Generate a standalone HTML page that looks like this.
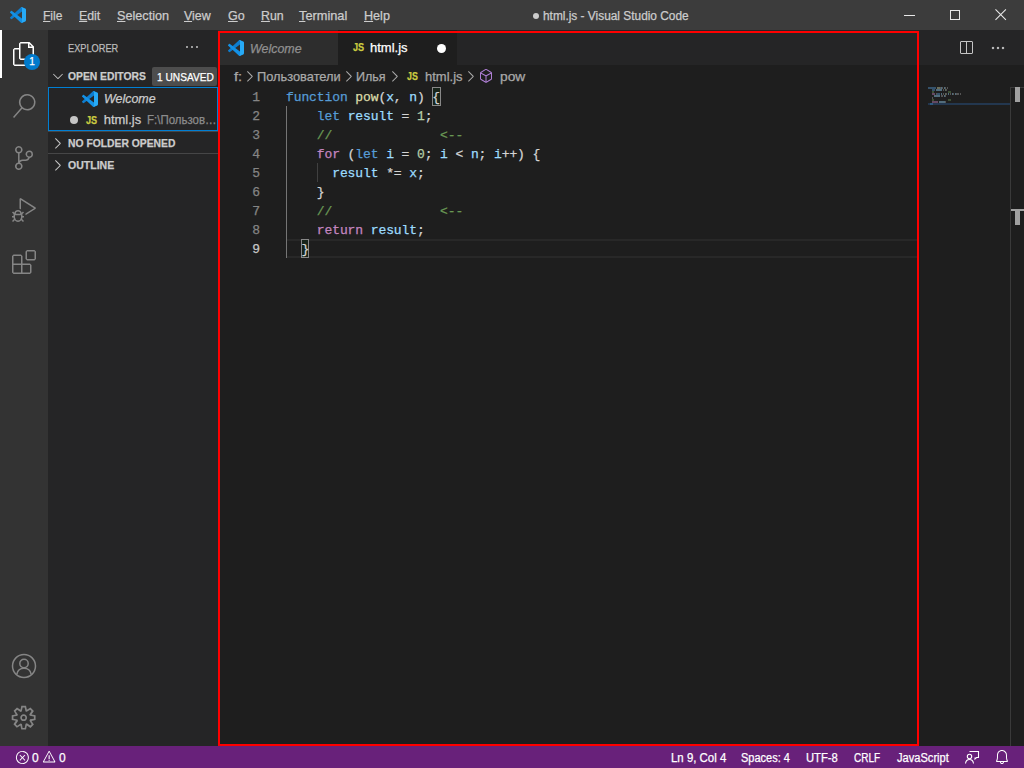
<!DOCTYPE html>
<html lang="en">
<head>
<meta charset="utf-8">
<title>html.js - Visual Studio Code</title>
<style>
*{box-sizing:border-box;margin:0;padding:0}
html,body{width:1024px;height:768px;overflow:hidden;background:#1e1e1e}
body{position:relative;font-family:"Liberation Sans",sans-serif;font-size:13px;color:#ccc}
.abs{position:absolute}
.t{position:absolute;white-space:pre;line-height:16px;height:16px;-webkit-text-stroke:0.25px currentColor}
u{text-decoration:underline;text-underline-offset:1px;text-decoration-thickness:1px}
.m{top:8px;font-size:13px;color:#ccc}
.sb{top:750px;font-size:12px;color:#fff}
.hd{font-size:11px;font-weight:bold;color:#ccc}
.code{font-family:"Liberation Mono",monospace;font-size:13px;margin-top:1px;letter-spacing:-0.1px;color:#d4d4d4;left:286px;line-height:19px;height:19px}
.ln{font-family:"Liberation Mono",monospace;font-size:13px;margin-top:1px;color:#858585;left:236px;width:24px;text-align:right;line-height:19px;height:19px}
.k{color:#569cd6}.f{color:#dcdcaa}.v{color:#9cdcfe}.n{color:#b5cea8}.c{color:#6a9955}.p{color:#c586c0}
.js{font-size:11px;font-weight:bold;color:#cbcb41}
.bc{top:68.5px;font-size:13px;color:#a9a9a9}
#t1{left:43.34px !important;transform:scaleX(0.9253);transform-origin:0 0}
#t2{left:78.63px !important;transform:scaleX(0.9496);transform-origin:0 0}
#t3{left:117.07px !important;transform:scaleX(0.9726);transform-origin:0 0}
#t4{left:184.39px !important;transform:scaleX(0.9540);transform-origin:0 0}
#t5{left:227.91px !important;transform:scaleX(0.9618);transform-origin:0 0}
#t6{left:260.74px !important;transform:scaleX(0.9484);transform-origin:0 0}
#t7{left:298.93px !important;transform:scaleX(0.9835);transform-origin:0 0}
#t8{left:363.67px !important;transform:scaleX(0.9698);transform-origin:0 0}
#t9{left:542.52px !important;transform:scaleX(0.9897);transform-origin:0 0}
#t11{left:68.29px !important;transform:scaleX(0.8390);transform-origin:0 0}
#t12{left:68.28px !important;transform:scaleX(0.9384);transform-origin:0 0}
#t13{left:156.70px !important;transform:scaleX(0.9230);transform-origin:0 0}
#t14{left:103.56px !important;transform:scaleX(0.9575);transform-origin:0 0}
#t15{left:86.32px !important;transform:scaleX(0.8302);transform-origin:0 0}
#t16{left:103.70px !important;transform:scaleX(1.0000);transform-origin:0 0}
#t17{left:146.86px !important;transform:scaleX(0.9562);transform-origin:0 0}
#t18{left:68.04px !important;transform:scaleX(0.9398);transform-origin:0 0}
#t19{left:68.32px !important;transform:scaleX(0.9563);transform-origin:0 0}
#t20{left:250.27px !important;transform:scaleX(0.9558);transform-origin:0 0}
#t21{left:352.88px !important;transform:scaleX(0.8302);transform-origin:0 0}
#t22{left:369.58px !important;transform:scaleX(0.9986);transform-origin:0 0}
#t23{left:234.27px !important;transform:scaleX(1.1361);transform-origin:0 0}
#t24{left:257.38px !important;transform:scaleX(0.9868);transform-origin:0 0}
#t25{left:356.26px !important;transform:scaleX(0.9641);transform-origin:0 0}
#t26{left:407.15px !important;transform:scaleX(0.8038);transform-origin:0 0}
#t27{left:424.84px !important;transform:scaleX(0.9986);transform-origin:0 0}
#t28{left:499.92px !important;transform:scaleX(1.0596);transform-origin:0 0}
#t49{left:670.83px !important;transform:scaleX(0.9520);transform-origin:0 0}
#t50{left:741.43px !important;transform:scaleX(0.9151);transform-origin:0 0}
#t51{left:806.09px !important;transform:scaleX(0.9368);transform-origin:0 0}
#t52{left:854.22px !important;transform:scaleX(0.8341);transform-origin:0 0}
#t53{left:897.49px !important;transform:scaleX(0.9244);transform-origin:0 0}
</style>
</head>
<body>

<!-- ===== backgrounds ===== -->
<div class="abs" style="left:0;top:0;width:1024px;height:30px;background:#3c3c3c"></div>
<div class="abs" style="left:0;top:30px;width:48px;height:716px;background:#333"></div>
<div class="abs" style="left:48px;top:30px;width:170px;height:716px;background:#252526"></div>
<div class="abs" style="left:218px;top:30px;width:806px;height:35px;background:#252526"></div>
<div class="abs" style="left:218px;top:30px;width:120px;height:35px;background:#2d2d2d"></div>
<div class="abs" style="left:338px;top:30px;width:119px;height:35px;background:#1e1e1e"></div>
<div class="abs" style="left:0;top:746px;width:1024px;height:22px;background:#68217a"></div>

<!-- ===== TITLE BAR ===== -->
<svg class="abs" style="left:10px;top:7px" width="16" height="16" viewBox="0 0 100 100"><path fill="#0d7dcf" d="M96.4614 10.7962L75.8569 0.875542C73.4719 -0.272773 70.6217 0.211611 68.75 2.08333L1.29858 63.5832C-0.515693 65.2373 -0.513607 68.0937 1.30308 69.7452L6.81272 74.7541C8.29793 76.1042 10.5347 76.2036 12.1338 74.9905L93.3609 13.3699C96.086 11.3026 100 13.2462 100 16.6667V16.4275C100 14.0265 98.6246 11.8378 96.4614 10.7962Z"/><path fill="#1391e6" d="M96.4614 89.2038L75.8569 99.1245C73.4719 100.273 70.6217 99.7884 68.75 97.9167L1.29858 36.4169C-0.515693 34.7627 -0.513607 31.9063 1.30308 30.2548L6.81272 25.2459C8.29793 23.8958 10.5347 23.7964 12.1338 25.0095L93.3609 86.6301C96.086 88.6974 100 86.7538 100 83.3334V83.5726C100 85.9735 98.6246 88.1622 96.4614 89.2038Z"/><path fill="#27aaf6" d="M75.8578 99.1263C73.4721 100.274 70.6219 99.7885 68.75 97.9166C71.0564 100.223 75 98.5895 75 95.3278V4.67213C75 1.41039 71.0564 -0.223106 68.75 2.08329C70.6219 0.211402 73.4721 -0.273666 75.8578 0.873633L96.4587 10.7807C98.6234 11.8217 100 14.0112 100 16.4132V83.5871C100 85.9891 98.6234 88.1786 96.4586 89.2196L75.8578 99.1263Z"/></svg>
<span id="t1" class="t m" style="left:43px"><u>F</u>ile</span>
<span id="t2" class="t m" style="left:78px"><u>E</u>dit</span>
<span id="t3" class="t m" style="left:116px"><u>S</u>election</span>
<span id="t4" class="t m" style="left:184px"><u>V</u>iew</span>
<span id="t5" class="t m" style="left:228px"><u>G</u>o</span>
<span id="t6" class="t m" style="left:260px"><u>R</u>un</span>
<span id="t7" class="t m" style="left:299px"><u>T</u>erminal</span>
<span id="t8" class="t m" style="left:363px"><u>H</u>elp</span>
<div class="abs" style="left:533px;top:13px;width:6px;height:6px;border-radius:50%;background:#ccc"></div>
<span id="t9" class="t" style="left:543px;top:8px;font-size:12px;color:#ccc">html.js - Visual Studio Code</span>
<div class="abs" style="left:904px;top:15px;width:11px;height:1px;background:#e8e8e8"></div>
<div class="abs" style="left:950px;top:10px;width:10px;height:10px;border:1px solid #e8e8e8"></div>
<svg class="abs" style="left:995.3px;top:9.4px" width="11.4" height="11.4" viewBox="0 0 12 12"><path d="M0.5 0.5 L11.5 11.5 M11.5 0.5 L0.5 11.5" stroke="#e8e8e8" stroke-width="1.1" fill="none"/></svg>

<!-- ===== ACTIVITY BAR ===== -->
<div class="abs" style="left:0;top:30px;width:2px;height:48px;background:#fff"></div>
<svg class="abs" style="left:12px;top:42px" width="24" height="24" viewBox="0 0 24 24"><path fill="#fff" d="M17.5 0h-9L7 1.500V6H2.500L1 7.500v15.070L2.500 24h12.070L16 22.570V18h4.700l1.300-1.430V4.500L17.500 0zm0 2.120l2.380 2.380H17.500V2.120zm-3 20.380h-12v-15H7v9.070L8.500 18h6v4.500zm6-6h-12v-15H16V6h4.500v10.500z"/></svg>
<div class="abs" style="left:24px;top:54px;width:16px;height:16px;border-radius:50%;background:#007acc"></div>
<span id="t10" class="t" style="left:24px;top:54px;width:16px;text-align:center;font-size:10px;color:#fff">1</span>
<svg class="abs" style="left:12px;top:94px" width="24" height="24" viewBox="0 0 24 24"><path fill="#858585" d="M15.250 0a8.250 8.250 0 0 0-6.180 13.720L1 22.880l1.120 1 8.050-9.120A8.251 8.251 0 1 0 15.250.010V0zm0 15a6.750 6.750 0 1 1 0-13.500 6.750 6.750 0 0 1 0 13.500z"/></svg>
<svg class="abs" style="left:12px;top:146px" width="24" height="24" viewBox="0 0 24 24"><path fill="#858585" d="M21.007 8.222A3.738 3.738 0 0 0 15.045 5.200a3.737 3.737 0 0 0 1.156 6.583 2.988 2.988 0 0 1-2.668 1.670h-2.990a4.456 4.456 0 0 0-2.989 1.165V7.400a3.737 3.737 0 1 0-1.494 0v9.117a3.776 3.776 0 1 0 1.816.099 2.990 2.990 0 0 1 2.668-1.667h2.990a4.484 4.484 0 0 0 4.223-3.039 3.736 3.736 0 0 0 3.250-3.687zM4.565 3.738a2.242 2.242 0 1 1 4.484 0 2.242 2.242 0 0 1-4.484 0zm4.484 16.441a2.242 2.242 0 1 1-4.484 0 2.242 2.242 0 0 1 4.484 0zm8.221-9.715a2.242 2.242 0 1 1 0-4.485 2.242 2.242 0 0 1 0 4.485z"/></svg>
<svg class="abs" style="left:12px;top:198px" width="24" height="24" viewBox="0 0 24 24"><path fill="#858585" d="M10.940 13.500l-1.320 1.320a3.730 3.730 0 0 0-7.240 0L1.060 13.500 0 14.560l1.720 1.720-.220.220V18H0v1.500h1.500v.080c.077.489.214.966.410 1.420L0 22.940 1.060 24l1.650-1.650A4.308 4.308 0 0 0 6 24a4.310 4.310 0 0 0 3.290-1.650L10.940 24 12 22.940 10.090 21c.198-.464.336-.951.410-1.450v-.100H12V18h-1.500v-1.500l-.220-.220L12 14.560l-1.060-1.060zM6 13.500a2.250 2.250 0 0 1 2.250 2.250h-4.500A2.250 2.250 0 0 1 6 13.500zm3 6a3.330 3.330 0 0 1-3 3 3.330 3.330 0 0 1-3-3v-2.250h6v2.250zm14.760-9.900v1.260L13.500 17.370V15.600l8.500-5.370L9 2v9.460a5.070 5.070 0 0 0-1.500-.720V.630L8.640 0l15.120 9.600z"/></svg>
<svg class="abs" style="left:12px;top:250px" width="24" height="24" viewBox="0 0 24 24"><path fill="#858585" d="M13.500 1.500L15 0h7.500L24 1.500V9l-1.500 1.500H15L13.500 9V1.500zm1.500 0V9h7.500V1.500H15zM0 15V6l1.500-1.500H9L10.500 6v7.500H18l1.500 1.500v7.500L18 24H1.500L0 22.500V15zm9-1.500V6H1.500v7.500H9zM9 15H1.500v7.500H9V15zm1.500 7.500H18V15h-7.500v7.500z"/></svg>
<!-- account -->
<svg class="abs" style="left:12px;top:654px" width="24" height="24" viewBox="0 0 24 24" fill="none" stroke="#858585" stroke-width="1.5" overflow="visible"><circle cx="12" cy="12" r="11.5"/><circle cx="12" cy="9.500" r="4.200"/><path d="M4.800 20.300c.700-3.600 3.500-6 7.200-6s6.500 2.400 7.200 6"/></svg>
<!-- gear -->
<svg class="abs" style="left:10.4px;top:704.1px" width="27.3" height="27.3" viewBox="0 0 16 16"><path fill="#858585" fill-rule="evenodd" d="M9.100 4.400L8.600 2H7.400l-.500 2.400-.700.300-2-1.300-.900.800 1.300 2-.200.700-2.400.500v1.200l2.400.500.300.800-1.300 2 .800.800 2-1.300.800.300.400 2.300h1.200l.500-2.400.800-.300 2 1.300.800-.800-1.300-2 .300-.800 2.300-.400V7.400l-2.400-.500-.300-.800 1.300-2-.800-.800-2 1.300-.700-.200zM9.400 1l.500 2.400L12 2.100l2 2-1.400 2.100 2.400.400v2.800l-2.400.500L14 12l-2 2-2.100-1.400-.500 2.400H6.600l-.500-2.400L4 13.900l-2-2 1.400-2.100L1 9.400V6.600l2.400-.500L2.100 4l2-2 2.100 1.400.400-2.400h2.800zm.600 7c0 1.100-.900 2-2 2s-2-.900-2-2 .900-2 2-2 2 .900 2 2zM8 9c.600 0 1-.400 1-1s-.400-1-1-1-1 .400-1 1 .400 1 1 1z"/></svg>

<!-- ===== SIDEBAR ===== -->
<span id="t11" class="t" style="left:68px;top:40px;font-size:11px;color:#bbb">EXPLORER</span>
<svg class="abs" style="left:184px;top:39px" width="16" height="16" viewBox="0 0 16 16"><path fill="#c5c5c5" d="M4 8a1 1 0 1 1-2 0 1 1 0 0 1 2 0zm5 0a1 1 0 1 1-2 0 1 1 0 0 1 2 0zm5 0a1 1 0 1 1-2 0 1 1 0 0 1 2 0z"/></svg>
<svg class="abs" style="left:50px;top:68px" width="16" height="16" viewBox="0 0 16 16"><path d="M7.976 10.072l4.357-4.357.62.618L8.284 11h-.618L3 6.333l.619-.618 4.357 4.357z" fill="#c5c5c5"/></svg>
<span id="t12" class="t hd" style="left:68px;top:68px">OPEN EDITORS</span>
<div class="abs" style="left:152px;top:67px;width:65px;height:19px;background:#4d4d4d;border-radius:2px"></div>
<span id="t13" class="t" style="left:157px;top:69px;font-size:11px;color:#fff">1 UNSAVED</span>
<div class="abs" style="left:48px;top:87px;width:170px;height:44px;border:1px solid #007fd4"></div>
<svg class="abs" style="left:82px;top:90.6px" width="16" height="16" viewBox="0 0 100 100"><path fill="#0d7dcf" d="M96.4614 10.7962L75.8569 0.875542C73.4719 -0.272773 70.6217 0.211611 68.75 2.08333L1.29858 63.5832C-0.515693 65.2373 -0.513607 68.0937 1.30308 69.7452L6.81272 74.7541C8.29793 76.1042 10.5347 76.2036 12.1338 74.9905L93.3609 13.3699C96.086 11.3026 100 13.2462 100 16.6667V16.4275C100 14.0265 98.6246 11.8378 96.4614 10.7962Z"/><path fill="#1391e6" d="M96.4614 89.2038L75.8569 99.1245C73.4719 100.273 70.6217 99.7884 68.75 97.9167L1.29858 36.4169C-0.515693 34.7627 -0.513607 31.9063 1.30308 30.2548L6.81272 25.2459C8.29793 23.8958 10.5347 23.7964 12.1338 25.0095L93.3609 86.6301C96.086 88.6974 100 86.7538 100 83.3334V83.5726C100 85.9735 98.6246 88.1622 96.4614 89.2038Z"/><path fill="#27aaf6" d="M75.8578 99.1263C73.4721 100.274 70.6219 99.7885 68.75 97.9166C71.0564 100.223 75 98.5895 75 95.3278V4.67213C75 1.41039 71.0564 -0.223106 68.75 2.08329C70.6219 0.211402 73.4721 -0.273666 75.8578 0.873633L96.4587 10.7807C98.6234 11.8217 100 14.0112 100 16.4132V83.5871C100 85.9891 98.6234 88.1786 96.4586 89.2196L75.8578 99.1263Z"/></svg>
<span id="t14" class="t" style="left:104px;top:90.5px;font-style:italic;color:#ccc">Welcome</span>
<div class="abs" style="left:70px;top:116px;width:8px;height:8px;border-radius:50%;background:#c5c5c5"></div>
<span id="t15" class="t js" style="left:86px;top:112px">JS</span>
<span id="t16" class="t" style="left:104px;top:112px;color:#ccc">html.js</span>
<span id="t17" class="t" style="left:148px;top:112px;font-size:12px;color:#8c8c8c">F:\Пользов…</span>
<div class="abs" style="left:48px;top:131px;width:170px;height:1px;background:#464647"></div>
<svg class="abs" style="left:50.4px;top:135px" width="16" height="16" viewBox="0 0 16 16"><path d="M5.7 13.7L5 13l4.6-4.6L5 3.7l.7-.7 5 5v.7l-5 5z" fill="#c5c5c5"/></svg>
<span id="t18" class="t hd" style="left:68px;top:135px">NO FOLDER OPENED</span>
<div class="abs" style="left:48px;top:153px;width:170px;height:1px;background:#464647"></div>
<svg class="abs" style="left:50.4px;top:157px" width="16" height="16" viewBox="0 0 16 16"><path d="M5.7 13.7L5 13l4.6-4.6L5 3.7l.7-.7 5 5v.7l-5 5z" fill="#c5c5c5"/></svg>
<span id="t19" class="t hd" style="left:68px;top:157px">OUTLINE</span>

<!-- ===== TABS ===== -->
<svg class="abs" style="left:228px;top:40px" width="16" height="16" viewBox="0 0 100 100"><path fill="#0d7dcf" d="M96.4614 10.7962L75.8569 0.875542C73.4719 -0.272773 70.6217 0.211611 68.75 2.08333L1.29858 63.5832C-0.515693 65.2373 -0.513607 68.0937 1.30308 69.7452L6.81272 74.7541C8.29793 76.1042 10.5347 76.2036 12.1338 74.9905L93.3609 13.3699C96.086 11.3026 100 13.2462 100 16.6667V16.4275C100 14.0265 98.6246 11.8378 96.4614 10.7962Z"/><path fill="#1391e6" d="M96.4614 89.2038L75.8569 99.1245C73.4719 100.273 70.6217 99.7884 68.75 97.9167L1.29858 36.4169C-0.515693 34.7627 -0.513607 31.9063 1.30308 30.2548L6.81272 25.2459C8.29793 23.8958 10.5347 23.7964 12.1338 25.0095L93.3609 86.6301C96.086 88.6974 100 86.7538 100 83.3334V83.5726C100 85.9735 98.6246 88.1622 96.4614 89.2038Z"/><path fill="#27aaf6" d="M75.8578 99.1263C73.4721 100.274 70.6219 99.7885 68.75 97.9166C71.0564 100.223 75 98.5895 75 95.3278V4.67213C75 1.41039 71.0564 -0.223106 68.75 2.08329C70.6219 0.211402 73.4721 -0.273666 75.8578 0.873633L96.4587 10.7807C98.6234 11.8217 100 14.0112 100 16.4132V83.5871C100 85.9891 98.6234 88.1786 96.4586 89.2196L75.8578 99.1263Z"/></svg>
<span id="t20" class="t" style="left:250px;top:41px;font-style:italic;color:#909090">Welcome</span>
<span id="t21" class="t js" style="left:353px;top:39px">JS</span>
<span id="t22" class="t" style="left:370px;top:40px;color:#fff">html.js</span>
<div class="abs" style="left:436.6px;top:43.5px;width:9px;height:9px;border-radius:50%;background:#fff"></div>
<!-- editor actions -->
<svg class="abs" style="left:958px;top:40px" width="16" height="16" viewBox="0 0 16 16"><path fill="#c5c5c5" d="M14 1H3L2 2v11l1 1h11l1-1V2l-1-1zM8 13H3V2h5v11zm6 0H9V2h5v11z"/></svg>
<svg class="abs" style="left:990px;top:40px" width="16" height="16" viewBox="0 0 16 16"><path fill="#d8d8d8" stroke="#d8d8d8" stroke-width=".3" d="M4 8a1 1 0 1 1-2 0 1 1 0 0 1 2 0zm5 0a1 1 0 1 1-2 0 1 1 0 0 1 2 0zm5 0a1 1 0 1 1-2 0 1 1 0 0 1 2 0z"/></svg>

<!-- ===== BREADCRUMBS ===== -->
<span id="t23" class="t bc" style="left:234px">f:</span>
<svg class="abs" style="left:241.6px;top:68px" width="16" height="16" viewBox="0 0 16 16"><path d="M5.7 13.7L5 13l4.6-4.6L5 3.7l.7-.7 5 5v.7l-5 5z" fill="#a9a9a9"/></svg>
<span id="t24" class="t bc" style="left:257px">Пользователи</span>
<svg class="abs" style="left:340.8px;top:68px" width="16" height="16" viewBox="0 0 16 16"><path d="M5.7 13.7L5 13l4.6-4.6L5 3.7l.7-.7 5 5v.7l-5 5z" fill="#a9a9a9"/></svg>
<span id="t25" class="t bc" style="left:357px">Илья</span>
<svg class="abs" style="left:387px;top:68px" width="16" height="16" viewBox="0 0 16 16"><path d="M5.7 13.7L5 13l4.6-4.6L5 3.7l.7-.7 5 5v.7l-5 5z" fill="#a9a9a9"/></svg>
<span id="t26" class="t js" style="left:407px;top:68px">JS</span>
<span id="t27" class="t bc" style="left:424px">html.js</span>
<svg class="abs" style="left:462.5px;top:68px" width="16" height="16" viewBox="0 0 16 16"><path d="M5.7 13.7L5 13l4.6-4.6L5 3.7l.7-.7 5 5v.7l-5 5z" fill="#a9a9a9"/></svg>
<svg class="abs" style="left:478px;top:68px" width="16" height="16" viewBox="0 0 16 16"><path fill="#b180d7" d="M13.510 4l-5-3h-1l-5 3-.490.860v6l.490.850 5 3h1l5-3 .490-.850v-6L13.510 4zm-6 9.560l-4.500-2.700V5.700l4.500 2.450v5.410zM3.270 4.700l4.740-2.840 4.740 2.840-4.740 2.590L3.270 4.700zm9.740 6.160l-4.500 2.700V8.150l4.500-2.450v5.160z"/></svg>
<span id="t28" class="t bc" style="left:500px">pow</span>

<!-- ===== EDITOR ===== -->
<div class="abs" style="left:286px;top:239px;width:632px;height:19px;border-top:2px solid #282828;border-bottom:2px solid #282828"></div>
<div class="abs" style="left:286px;top:106px;width:1px;height:152px;background:#757575"></div>
<div class="abs" style="left:317px;top:163px;width:1px;height:19px;background:#404040"></div>
<div class="abs" style="left:432px;top:87px;width:8.5px;height:19px;border:1px solid #888;background:#18241a"></div>
<div class="abs" style="left:301px;top:239px;width:8.3px;height:19px;border:1px solid #888;background:#18241a"></div>

<span id="t29" class="t ln" style="top:87px">1</span>
<span id="t30" class="t ln" style="top:106px">2</span>
<span id="t31" class="t ln" style="top:125px">3</span>
<span id="t32" class="t ln" style="top:144px">4</span>
<span id="t33" class="t ln" style="top:163px">5</span>
<span id="t34" class="t ln" style="top:182px">6</span>
<span id="t35" class="t ln" style="top:201px">7</span>
<span id="t36" class="t ln" style="top:220px">8</span>
<span id="t37" class="t ln" style="top:239px;color:#c6c6c6">9</span>

<span id="t38" class="t code" style="top:87px"><span class="k">function</span> <span class="f">pow</span>(<span class="v">x</span>, <span class="v">n</span>) {</span>
<span id="t39" class="t code" style="top:106px">    <span class="k">let</span> <span class="v">result</span> = <span class="n">1</span>;</span>
<span id="t40" class="t code c" style="top:125px">    //              &lt;--</span>
<span id="t41" class="t code" style="top:144px">    <span class="p">for</span> (<span class="k">let</span> <span class="v">i</span> = <span class="n">0</span>; <span class="v">i</span> &lt; <span class="v">n</span>; <span class="v">i</span>++) {</span>
<span id="t42" class="t code" style="top:163px">      <span class="v">result</span> *= <span class="v">x</span>;</span>
<span id="t43" class="t code" style="top:182px">    }</span>
<span id="t44" class="t code c" style="top:201px">    //              &lt;--</span>
<span id="t45" class="t code" style="top:220px">    <span class="p">return</span> <span class="v">result</span>;</span>
<span id="t46" class="t code" style="top:239px">  }</span>

<!-- minimap -->
<div class="abs" style="left:928px;top:103px;width:82px;height:2px;background:#23374f"></div>
<div class="abs" style="left:928px;top:87px;width:8px;height:2px;background:#569cd6;opacity:0.42"></div>
<div class="abs" style="left:937px;top:87px;width:3px;height:2px;background:#dcdcaa;opacity:0.42"></div>
<div class="abs" style="left:940px;top:87px;width:1px;height:2px;background:#d4d4d4;opacity:0.30"></div>
<div class="abs" style="left:941px;top:87px;width:1px;height:2px;background:#9cdcfe;opacity:0.42"></div>
<div class="abs" style="left:942px;top:87px;width:1px;height:2px;background:#d4d4d4;opacity:0.30"></div>
<div class="abs" style="left:944px;top:87px;width:1px;height:2px;background:#9cdcfe;opacity:0.42"></div>
<div class="abs" style="left:945px;top:87px;width:1px;height:2px;background:#d4d4d4;opacity:0.30"></div>
<div class="abs" style="left:947px;top:87px;width:1px;height:2px;background:#d4d4d4;opacity:0.30"></div>
<div class="abs" style="left:932px;top:89px;width:3px;height:2px;background:#569cd6;opacity:0.42"></div>
<div class="abs" style="left:936px;top:89px;width:6px;height:2px;background:#9cdcfe;opacity:0.42"></div>
<div class="abs" style="left:943px;top:89px;width:1px;height:2px;background:#d4d4d4;opacity:0.30"></div>
<div class="abs" style="left:945px;top:89px;width:1px;height:2px;background:#b5cea8;opacity:0.42"></div>
<div class="abs" style="left:946px;top:89px;width:1px;height:2px;background:#d4d4d4;opacity:0.30"></div>
<div class="abs" style="left:932px;top:91px;width:2px;height:2px;background:#6a9955;opacity:0.42"></div>
<div class="abs" style="left:948px;top:91px;width:3px;height:2px;background:#6a9955;opacity:0.42"></div>
<div class="abs" style="left:932px;top:93px;width:3px;height:2px;background:#c586c0;opacity:0.42"></div>
<div class="abs" style="left:936px;top:93px;width:1px;height:2px;background:#d4d4d4;opacity:0.30"></div>
<div class="abs" style="left:937px;top:93px;width:3px;height:2px;background:#569cd6;opacity:0.42"></div>
<div class="abs" style="left:941px;top:93px;width:1px;height:2px;background:#9cdcfe;opacity:0.42"></div>
<div class="abs" style="left:943px;top:93px;width:1px;height:2px;background:#d4d4d4;opacity:0.30"></div>
<div class="abs" style="left:945px;top:93px;width:1px;height:2px;background:#b5cea8;opacity:0.42"></div>
<div class="abs" style="left:946px;top:93px;width:1px;height:2px;background:#d4d4d4;opacity:0.30"></div>
<div class="abs" style="left:948px;top:93px;width:1px;height:2px;background:#9cdcfe;opacity:0.42"></div>
<div class="abs" style="left:950px;top:93px;width:1px;height:2px;background:#d4d4d4;opacity:0.30"></div>
<div class="abs" style="left:952px;top:93px;width:1px;height:2px;background:#9cdcfe;opacity:0.42"></div>
<div class="abs" style="left:953px;top:93px;width:1px;height:2px;background:#d4d4d4;opacity:0.30"></div>
<div class="abs" style="left:955px;top:93px;width:1px;height:2px;background:#9cdcfe;opacity:0.42"></div>
<div class="abs" style="left:956px;top:93px;width:2px;height:2px;background:#d4d4d4;opacity:0.30"></div>
<div class="abs" style="left:958px;top:93px;width:1px;height:2px;background:#d4d4d4;opacity:0.30"></div>
<div class="abs" style="left:960px;top:93px;width:1px;height:2px;background:#d4d4d4;opacity:0.30"></div>
<div class="abs" style="left:934px;top:95px;width:6px;height:2px;background:#9cdcfe;opacity:0.42"></div>
<div class="abs" style="left:941px;top:95px;width:2px;height:2px;background:#d4d4d4;opacity:0.30"></div>
<div class="abs" style="left:944px;top:95px;width:1px;height:2px;background:#9cdcfe;opacity:0.42"></div>
<div class="abs" style="left:945px;top:95px;width:1px;height:2px;background:#d4d4d4;opacity:0.30"></div>
<div class="abs" style="left:932px;top:97px;width:1px;height:2px;background:#d4d4d4;opacity:0.30"></div>
<div class="abs" style="left:932px;top:99px;width:2px;height:2px;background:#6a9955;opacity:0.42"></div>
<div class="abs" style="left:948px;top:99px;width:3px;height:2px;background:#6a9955;opacity:0.42"></div>
<div class="abs" style="left:932px;top:101px;width:6px;height:2px;background:#c586c0;opacity:0.42"></div>
<div class="abs" style="left:939px;top:101px;width:6px;height:2px;background:#9cdcfe;opacity:0.42"></div>
<div class="abs" style="left:945px;top:101px;width:1px;height:2px;background:#d4d4d4;opacity:0.30"></div>
<div class="abs" style="left:930px;top:103px;width:3px;height:2px;background:#3f86c9;opacity:0.42"></div>
<!-- scrollbar -->
<div class="abs" style="left:1010px;top:87px;width:1px;height:659px;background:#3a3a3a"></div>
<div class="abs" style="left:1010px;top:87px;width:14px;height:1px;background:#3a3a3a"></div>
<div class="abs" style="left:1015px;top:87px;width:5px;height:15px;background:#a0a0a0"></div>
<div class="abs" style="left:1011px;top:209px;width:13px;height:2px;background:#a0a0a0"></div>
<div class="abs" style="left:1015px;top:209px;width:5px;height:16px;background:#a0a0a0"></div>

<!-- red highlight rectangle -->
<div class="abs" style="left:218px;top:31px;width:701px;height:715px;border:2px solid #ff0000"></div>

<!-- ===== STATUS BAR ===== -->
<svg class="abs" style="left:14.5px;top:749.5px" width="15" height="15" viewBox="0 0 16 16"><path fill="#fff" d="M8.600 1c1.600.100 3.100.900 4.200 2 1.300 1.400 2 3.100 2 5.100 0 1.600-.600 3.100-1.600 4.400-1 1.200-2.400 2.100-4 2.400-1.600.300-3.200.100-4.600-.700-1.400-.800-2.500-2-3.100-3.500C.900 9.200.800 7.500 1.300 6c.500-1.600 1.400-2.900 2.800-3.800C5.400 1.300 7 .900 8.600 1zm.500 12.900c1.300-.300 2.500-1 3.400-2.100.800-1.100 1.300-2.400 1.200-3.800 0-1.600-.600-3.200-1.700-4.300-1-1-2.200-1.600-3.600-1.700-1.300-.100-2.700.200-3.800 1-1.100.800-1.900 1.900-2.300 3.300-.400 1.300-.400 2.700.200 4 .600 1.300 1.500 2.300 2.700 3 1.200.700 2.600.900 3.900.600zM7.900 7.500L10.300 5l.700.700-2.400 2.500 2.400 2.500-.700.700-2.400-2.500-2.400 2.500-.700-.700 2.400-2.500-2.400-2.500.700-.700 2.400 2.500z"/></svg>
<span id="t47" class="t sb" style="left:32px">0</span>
<svg class="abs" style="left:41.9px;top:749.9px" width="14.3" height="14.3" viewBox="0 0 16 16"><path fill="#fff" fill-rule="evenodd" d="M7.560 1h.880l6.540 12.260-.440.740H1.440L1 13.260 7.560 1zM8 2.280L2.280 13H13.700L8 2.280zM8.625 12v-1h-1.250v1h1.250zm-1.250-2V6h1.250v4h-1.250z"/></svg>
<span id="t48" class="t sb" style="left:59px">0</span>
<span id="t49" class="t sb" style="left:671px">Ln 9, Col 4</span>
<span id="t50" class="t sb" style="left:742px">Spaces: 4</span>
<span id="t51" class="t sb" style="left:807px">UTF-8</span>
<span id="t52" class="t sb" style="left:854px">CRLF</span>
<span id="t53" class="t sb" style="left:897px">JavaScript</span>
<svg class="abs" style="left:964px;top:749px" width="16" height="16" viewBox="0 0 16 16" fill="none" stroke="#fff" stroke-width="1.100"><path d="M5.500 2.500h9v6h-2l-1.500 1.500V8.500"/><circle cx="5.500" cy="7.500" r="2.200"/><path d="M1.500 14.500c.300-2.500 1.800-4 4-4s3.700 1.500 4 4"/></svg>
<svg class="abs" style="left:994px;top:749px" width="16" height="16" viewBox="0 0 16 16"><path fill="#fff" d="M13.377 10.573a7.630 7.630 0 0 1-.383-2.380V6.195a5.115 5.115 0 0 0-1.268-3.446 5.138 5.138 0 0 0-3.242-1.722c-.694-.072-1.400 0-2.070.227-.670.215-1.280.574-1.794 1.053a4.923 4.923 0 0 0-1.208 1.675 5.067 5.067 0 0 0-.431 2.022v2.200a7.610 7.610 0 0 1-.383 2.370L2 12.343l.479.658h3.505c0 .526.215 1.040.586 1.412.37.370.885.586 1.412.586.526 0 1.040-.215 1.411-.586s.587-.886.587-1.412h3.505l.478-.658-.586-1.770zm-4.690 3.147a.997.997 0 0 1-.705.299.997.997 0 0 1-.706-.300.997.997 0 0 1-.300-.705h1.999a.939.939 0 0 1-.287.706zm-5.515-1.710l.371-1.114a8.633 8.633 0 0 0 .443-2.691V6.004c0-.563.120-1.113.347-1.616.227-.514.550-.969.969-1.340.419-.382.910-.67 1.436-.837.538-.18 1.100-.240 1.650-.180a4.147 4.147 0 0 1 2.597 1.400 4.133 4.133 0 0 1 1.004 2.776v2.010c0 .909.144 1.818.443 2.691l.371 1.113h-9.630v-.012z"/></svg>

</body>
</html>
